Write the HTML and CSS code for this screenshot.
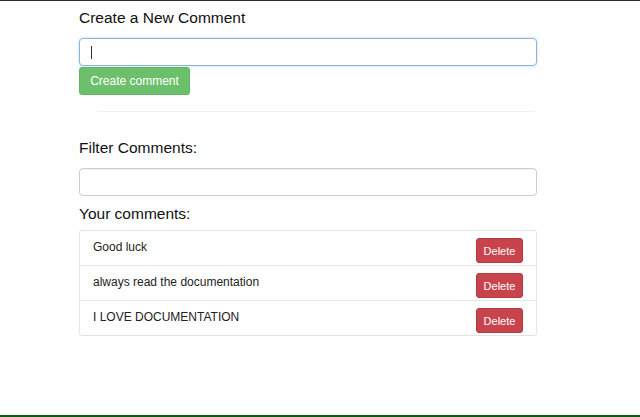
FILE: index.html
```html
<!DOCTYPE html>
<html lang="en">

<head>
    <meta charset="UTF-8">
    <meta name="viewport" content="width=device-width, initial-scale=1.0">
    <title>Comments</title>
    <link rel="stylesheet" href="styles.css">
</head>

<body>
    <div class="frame">
        <div class="container">
            <h3 class="title">Create a New Comment</h3>
            <div class="form-control focused"><span class="caret"></span></div>
            <button class="btn btn-success">Create comment</button>
            <hr class="divider">

            <h3 class="title filter-title">Filter Comments:</h3>
            <div class="form-control"></div>

            <h3 class="title list-title">Your comments:</h3>
            <ul class="list-group">
                <li class="list-group-item"><span>Good luck</span><button class="btn btn-danger">Delete</button></li>
                <li class="list-group-item"><span>always read the documentation</span><button class="btn btn-danger">Delete</button></li>
                <li class="list-group-item"><span>I LOVE DOCUMENTATION</span><button class="btn btn-danger">Delete</button></li>
            </ul>
        </div>
    </div>
</body>

</html>
```

FILE: styles.css
```css
html,
body {
    margin: 0;
    padding: 0;
    background: #fff;
}

body {
    font-family: "Liberation Sans", Arial, sans-serif;
    color: #222;
}

.frame {
    width: 640px;
    height: 417px;
    box-sizing: border-box;
    border-top: 1px solid #2b2b2b;
    border-bottom: 2px solid #0d5a12;
    overflow: hidden;
}

.container {
    width: 458px;
    margin-left: 79px;
    padding-top: 8px;
}

.title {
    margin: 0;
    font-size: 15.5px;
    font-weight: normal;
    line-height: 18px;
    color: #111;
}

.form-control {
    height: 28px;
    box-sizing: border-box;
    margin-top: 11px;
    border: 1px solid #ccc;
    border-radius: 4px;
    box-shadow: inset 0 1px 1px rgba(0, 0, 0, .06);
    display: flex;
    align-items: center;
}

.form-control.focused {
    border-color: #8fb4d8;
    box-shadow: 0 0 3px rgba(102, 175, 233, .5);
}

.caret {
    width: 1px;
    height: 13px;
    background: #333;
    margin-left: 11px;
}

.btn {
    border: 1px solid transparent;
    border-radius: 3px;
    font-family: inherit;
    color: #fff;
    cursor: pointer;
}

.btn-success {
    display: block;
    height: 28px;
    width: 111px;
    margin-top: 1px;
    padding: 0;
    background: #6cc06c;
    border-color: #62b562;
    font-size: 12px;
}

.divider {
    margin: 16px 2px 0 18px;
    border: 0;
    border-top: 1px solid #f0f0f0;
}

.filter-title {
    margin-top: 27px;
}

.list-title {
    margin-top: 9px;
}

.list-group {
    list-style: none;
    margin: 7px 0 0;
    padding: 0;
    border: 1px solid #e3e3e3;
    border-radius: 3px;
}

.list-group-item {
    height: 34px;
    display: flex;
    align-items: center;
    justify-content: space-between;
    padding: 0 13px 0 13px;
    font-size: 12px;
    color: #222;
    border-top: 1px solid #e8e8e8;
}

.list-group-item:first-child {
    border-top: 0;
}

.list-group-item span {
    margin-top: -2px;
}

.btn-danger {
    width: 47px;
    height: 25px;
    padding: 0;
    margin-top: 5px;
    background: #c8434b;
    border-color: #b23a41;
    font-size: 11px;
}
```
